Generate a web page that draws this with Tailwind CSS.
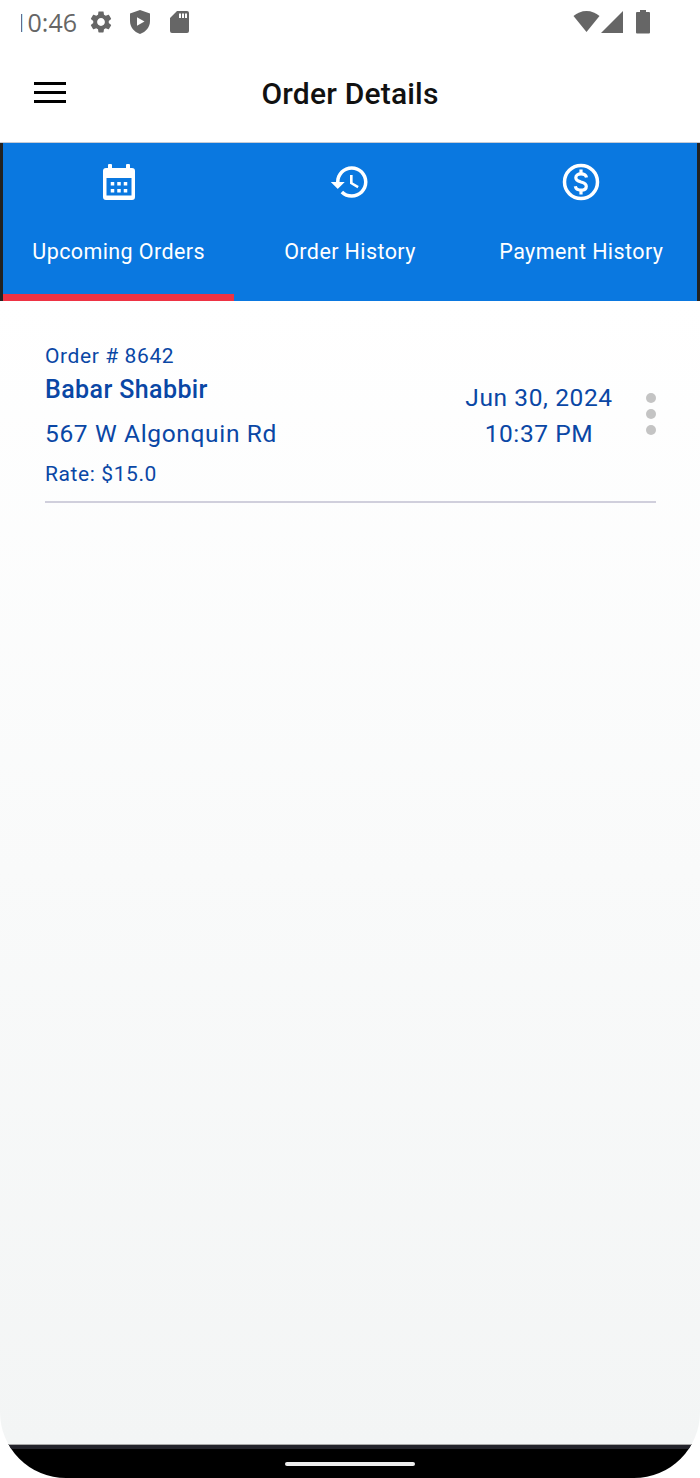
<!DOCTYPE html>
<html lang="en">
  <head>
    <meta charset="UTF-8" />
    <meta name="viewport" content="width=device-width, initial-scale=1.0" />
    <script src="https://cdn.jsdelivr.net/npm/@tailwindcss/browser@4"></script>
    <title>Order Details</title>
  </head>
  <body class="bg-white font-['Roboto',sans-serif]">
    <div class="w-[700px] h-[1478px] flex flex-col overflow-hidden rounded-b-[66px] bg-white">

      <!-- status bar -->
      <div class="h-[44px] flex items-center text-[#666666] shrink-0">
        <div class="ml-[21px] w-[56px] overflow-hidden flex justify-end">
          <span class="text-[25px] leading-[44px] font-['Open_Sans',sans-serif] whitespace-nowrap">10:46</span>
        </div>
        <svg class="ml-[11px] w-[26px] h-[26px]" viewBox="0 0 24 24" fill="currentColor"><path d="M19.14 12.94c.04-.3.06-.61.06-.94 0-.32-.02-.64-.07-.94l2.03-1.58c.18-.14.23-.41.12-.61l-1.92-3.32c-.12-.22-.37-.29-.59-.22l-2.39.96c-.5-.38-1.03-.7-1.62-.94l-.36-2.54c-.04-.24-.24-.41-.48-.41h-3.84c-.24 0-.43.17-.47.41l-.36 2.54c-.59.24-1.13.57-1.62.94l-2.39-.96c-.22-.08-.47 0-.59.22L2.74 8.87c-.12.21-.08.47.12.61l2.03 1.58c-.05.3-.09.63-.09.94s.02.64.07.94l-2.03 1.58c-.18.14-.23.41-.12.61l1.92 3.32c.12.22.37.29.59.22l2.39-.96c.5.38 1.03.7 1.62.94l.36 2.54c.05.24.24.41.48.41h3.84c.24 0 .44-.17.47-.41l.36-2.54c.59-.24 1.13-.56 1.62-.94l2.39.96c.22.08.47 0 .59-.22l1.92-3.32c.12-.22.07-.47-.12-.61l-2.01-1.58zM12 15.6c-1.98 0-3.6-1.62-3.6-3.6s1.62-3.6 3.6-3.6 3.6 1.62 3.6 3.6-1.62 3.6-3.6 3.6z"/></svg>
        <svg class="ml-[15px] w-[22px] h-[24px]" viewBox="0 0 22 24" fill="currentColor"><path fill-rule="evenodd" d="M11 0 21 3.6V11c0 6-4 10.800-10 13C5 21.800 1 17 1 11V3.600ZM8 7.200V15.800L15.500 11.500Z"/></svg>
        <svg class="ml-[19px] w-[19px] h-[24px]" viewBox="0 0 19 24" fill="currentColor"><path fill-rule="evenodd" d="M7 1H17a2 2 0 0 1 2 2V21a2 2 0 0 1-2 2H2a2 2 0 0 1-2-2V8ZM9 3.500V8h2V3.500ZM12 3.500V8h2V3.500ZM15 3.500V8h2V3.500Z"/></svg>
        <svg class="ml-auto w-[27px] h-[24px]" viewBox="0 0 27 24" fill="currentColor"><path d="M13.500 22 0.500 6C4 3 8.500 1 13.500 1S23 3 26.500 6Z"/></svg>
        <svg class="ml-[1px] w-[22px] h-[24px]" viewBox="0 0 22 24" fill="currentColor"><path d="M22 1V23H0Z"/></svg>
        <svg class="ml-[13px] mr-[50px] w-[14px] h-[24px]" viewBox="0 0 14 24" fill="currentColor"><path d="M4 0H10V2H13A1 1 0 0 1 14 3V22.500A1 1 0 0 1 13 23.500H1A1 1 0 0 1 0 22.500V3A1 1 0 0 1 1 2H4Z"/></svg>
      </div>

      <!-- app bar -->
      <div class="relative h-[98px] flex items-center justify-center shrink-0">
        <div class="absolute left-[34px] top-[38px] w-[32px] flex flex-col gap-[6px]">
          <div class="h-[3px] bg-black"></div>
          <div class="h-[3px] bg-black"></div>
          <div class="h-[3px] bg-black"></div>
        </div>
        <h1 class="text-[30px] leading-[98px] font-medium tracking-[0.2px] text-[#111111] pt-[1px]">Order Details</h1>
      </div>

      <!-- tabs -->
      <div class="h-[159px] shrink-0 flex px-[3px] bg-[#222222] border-t border-[#c5cbd6]">
        <div class="flex-1 relative flex flex-col items-center bg-[#0a78e0] text-white">
          <svg class="mt-[21px] w-[36px] h-[36px]" viewBox="0 0 36 36" fill="currentColor"><path fill-rule="evenodd" d="M7 1.500a2 2 0 0 1 4 0V4H25V1.500a2 2 0 0 1 4 0V4H31a3 3 0 0 1 3 3V33a3 3 0 0 1-3 3H5a3 3 0 0 1-3-3V7a3 3 0 0 1 3-3H7ZM5.500 14V31.500H30.500V14ZM9.750 18h3.500v3.500H9.750ZM16.250 18h3.500v3.500H16.250ZM22.750 18h3.500v3.500H22.750ZM9.750 25h3.500v3.500H9.750ZM16.250 25h3.500v3.500H16.250ZM22.750 25h3.500v3.500H22.750Z"/></svg>
          <span class="mt-[37px] text-[21.500px] leading-[30px] tracking-[0.4px] whitespace-nowrap">Upcoming Orders</span>
          <div class="absolute left-0 right-0 bottom-0 h-[7px] bg-[#ee3344]"></div>
        </div>
        <div class="flex-1 flex flex-col items-center bg-[#0a78e0] text-white">
          <svg class="mt-[18px] w-[42px] h-[42px]" viewBox="0 0 24 24" fill="currentColor"><path d="M13 3c-4.970 0-9 4.030-9 9H1l3.890 3.890.070.140L9 12H6c0-3.870 3.130-7 7-7s7 3.130 7 7-3.130 7-7 7c-1.930 0-3.680-.790-4.940-2.060l-1.420 1.420C8.270 19.990 10.510 21 13 21c4.970 0 9-4.030 9-9s-4.030-9-9-9zm-1 5v5l4.280 2.540.720-1.210-3.500-2.080V8H12z"/></svg>
          <span class="mt-[34px] text-[21.500px] leading-[30px] tracking-[0.4px] whitespace-nowrap">Order History</span>
        </div>
        <div class="flex-1 flex flex-col items-center bg-[#0a78e0] text-white">
          <svg class="mt-[18px] w-[42px] h-[42px]" viewBox="0 0 42 42" fill="none" stroke="currentColor"><circle cx="21" cy="21" r="16.500" stroke-width="3.500"/><path stroke-width="3.200" d="M26.500 16.500C26 14 24 12.800 21 12.800C17.800 12.800 15.800 14.500 15.800 16.800C15.800 19.500 18.500 20.300 21 21C23.800 21.700 26.300 22.700 26.300 25.300C26.300 27.800 24 29.200 21 29.200C17.800 29.200 15.800 27.800 15.300 25.300"/><path stroke-width="3.200" d="M21 8.500V13M21 29V33.500"/></svg>
          <span class="mt-[34px] text-[21.500px] leading-[30px] tracking-[0.4px] whitespace-nowrap">Payment History</span>
        </div>
      </div>

      <!-- list -->
      <div class="flex-1 pl-[45px] pr-[44px] pt-[41px] bg-gradient-to-b from-white to-[#f3f5f5]">
        <div class="flex items-center pb-[12px] border-b-2 border-[#d0cfdc] text-[#0a47a5]">
          <div class="flex-1">
            <p class="text-[21px] leading-[29px] tracking-[0.6px]">Order # 8642</p>
            <p class="text-[25px] leading-[38px] font-medium tracking-[0.4px]">Babar Shabbir</p>
            <p class="text-[24.500px] leading-[50px] tracking-[0.65px]">567 W Algonquin Rd</p>
            <p class="text-[21px] leading-[30px] tracking-[0.6px]">Rate: $15.0</p>
          </div>
          <div class="w-[148px] text-center text-[24.500px] leading-[36px] tracking-[0.6px] mr-[33px]">
            <p class="whitespace-nowrap">Jun 30, 2024</p>
            <p>10:37 PM</p>
          </div>
          <div class="flex flex-col gap-[6px] -mt-[3px]">
            <div class="w-[10px] h-[10px] rounded-full bg-[#c4c4c4]"></div>
            <div class="w-[10px] h-[10px] rounded-full bg-[#c4c4c4]"></div>
            <div class="w-[10px] h-[10px] rounded-full bg-[#c4c4c4]"></div>
          </div>
        </div>
      </div>

      <!-- nav bar -->
      <div class="h-[34px] shrink-0 bg-black border-t border-[#a8a8a8] flex flex-col items-center">
        <div class="w-full h-[4px] bg-[#23232b]"></div>
        <div class="mt-[13px] w-[130px] h-[4px] rounded-full bg-[#eeeeee]"></div>
      </div>
    </div>
  </body>
</html>
